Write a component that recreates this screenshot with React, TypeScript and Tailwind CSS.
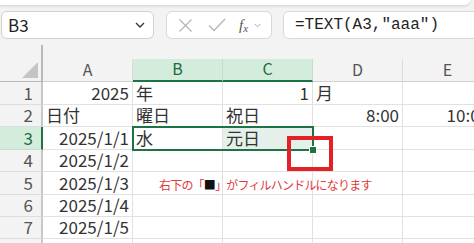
import React from 'react';

const FONT = { fontFamily: '"Noto Sans CJK JP", "Noto Sans", sans-serif' };

type Cell = { text?: string; align?: 'left' | 'right' };

const rows: { h: string; label: string; cells: Cell[] }[] = [
  { h: 'h-[23px]', label: '1', cells: [{ text: '2025', align: 'right' }, { text: '年' }, { text: '1', align: 'right' }, { text: '月' }, {}] },
  { h: 'h-[22px]', label: '2', cells: [{ text: '日付' }, { text: '曜日' }, { text: '祝日' }, { text: '8:00', align: 'right' }, { text: '10:00', align: 'right' }] },
  { h: 'h-[23px]', label: '3', cells: [{ text: '2025/1/1', align: 'right' }, { text: '水' }, { text: '元日' }, {}, {}] },
  { h: 'h-[22px]', label: '4', cells: [{ text: '2025/1/2', align: 'right' }, {}, {}, {}, {}] },
  { h: 'h-[23px]', label: '5', cells: [{ text: '2025/1/3', align: 'right' }, {}, {}, {}, {}] },
  { h: 'h-[22px]', label: '6', cells: [{ text: '2025/1/4', align: 'right' }, {}, {}, {}, {}] },
  { h: 'h-[22px]', label: '7', cells: [{ text: '2025/1/5', align: 'right' }, {}, {}, {}, {}] },
  { h: 'h-[22px]', label: '', cells: [{}, {}, {}, {}, {}] },
];

const cols = ['A', 'B', 'C', 'D', 'E'];

export default function App() {
  return (
    <div className="relative w-[474px] h-[243px] overflow-hidden bg-[#f3f3f3] text-[#333]" style={FONT}>
      {/* ribbon edge */}
      <div className="h-[5px] w-[470px] bg-white rounded-br-lg shadow-[0_1px_3px_rgba(0,0,0,0.15)]" />

      {/* formula bar */}
      <div className="flex items-center h-[28px] mt-[6px]">
        <div className="ml-[1px] w-[153px] h-full flex items-center justify-between bg-white border border-[#d1d1d1] rounded-md pl-[6px] pr-[8px]">
          <span className="text-[17px] leading-none text-[#222] pb-[2px]">B3</span>
          <svg width="10" height="6" viewBox="0 0 10 6" fill="none" stroke="#333" strokeWidth="1.3">
            <path d="M1 1l4 4 4-4" />
          </svg>
        </div>
        <div className="ml-[12px] w-[106px] h-full flex items-center bg-white border border-[#d8d8d8] rounded-md pl-[11px]">
          <svg width="15" height="15" viewBox="0 0 15 15" fill="none" stroke="#b5b5b5" strokeWidth="1.3">
            <path d="M1.5 1.5l12 12M13.5 1.5l-12 12" />
          </svg>
          <svg className="ml-[15px]" width="18" height="14" viewBox="0 0 18 14" fill="none" stroke="#b5b5b5" strokeWidth="1.3">
            <path d="M1 7.5l5 5L17 1" />
          </svg>
          <span className="ml-[13px] text-[15px] italic leading-none text-[#555]" style={{ fontFamily: '"Liberation Serif", serif' }}>
            f<sub className="text-[11px]">x</sub>
          </span>
          <svg className="ml-[6px]" width="7" height="5" viewBox="0 0 7 5" fill="none" stroke="#aaa" strokeWidth="1">
            <path d="M0.5 0.8l3 3 3-3" />
          </svg>
        </div>
        <div className="ml-[11px] flex-1 h-full flex items-center bg-white border border-[#d8d8d8] rounded-l-md pl-[11px] -mr-[10px]">
          <span className="text-[16px] leading-none text-[#222]" style={{ fontFamily: '"Liberation Mono", monospace' }}>
            =TEXT(A3,"aaa")
          </span>
        </div>
      </div>

      {/* sheet */}
      <div className="mt-[6px] flex flex-col">
        {/* column headers */}
        <div className="flex h-[37px]">
          <div className="relative w-[43px] shrink-0 border-r-2 border-b border-[#b9b9b9]">
            <div className="absolute right-[3px] bottom-[3px] w-0 h-0 border-l-[16px] border-l-transparent border-b-[16px] border-b-[#c4c4c4]" />
          </div>
          {cols.map((c) => {
            const sel = c === 'B' || c === 'C';
            return (
              <div key={c} className="w-[90px] shrink-0 flex flex-col justify-end">
                <div
                  className={`h-[23px] flex items-center justify-center text-[16px] leading-none pb-[3px] ${
                    sel
                      ? 'bg-[#d3ecdc] text-[#1d6b40] border-b-2 border-[#1f7244] border-r border-r-[#c6dccf]'
                      : 'text-[#555] border-b border-[#d0d0d0] border-r border-r-[#dcdcdc]'
                  }`}
                >
                  {c}
                </div>
              </div>
            );
          })}
        </div>

        {/* rows */}
        {rows.map((r, i) => {
          const sel = i === 2;
          return (
            <div key={i} className={`flex ${r.h}`}>
              <div
                className={`w-[43px] shrink-0 flex items-center justify-end pr-[8px] pb-[2px] text-[17px] leading-none border-b ${
                  sel
                    ? 'bg-[#d3ecdc] text-[#1d6b40] border-r-2 border-r-[#1f7244] border-b-[#c6dccf]'
                    : 'text-[#555] border-r-2 border-r-[#c8c8c8] border-b-[#dcdcdc]'
                }`}
              >
                {r.label}
              </div>
              {r.cells.map((c, j) => (
                <div
                  key={j}
                  className={`w-[90px] shrink-0 flex items-center overflow-hidden whitespace-nowrap border-r border-b border-[#e1e1e1] px-[3px] pb-[2px] text-[17px] leading-none ${
                    c.align === 'right' ? 'justify-end' : 'justify-start'
                  } ${sel && j === 2 ? 'bg-[#e6f0ea]' : 'bg-white'}`}
                >
                  {c.text}
                </div>
              ))}
            </div>
          );
        })}
      </div>

      {/* selection B3:C3 */}
      <div className="absolute left-[132px] top-[126px] w-[182px] h-[25px] border-2 border-[#1f7244] pointer-events-none" />
      {/* fill handle */}
      <div className="absolute left-[310px] top-[147px] w-[6px] h-[6px] bg-[#1f7244] outline outline-1 outline-white" />
      {/* red callout */}
      <div className="absolute left-[287px] top-[136px] w-[46px] h-[35px] border-4 border-[#e42127]" />
      <div className="absolute left-[159px] top-[179px] text-[12px] tracking-[-0.8px] leading-none text-[#e03a3a] whitespace-nowrap">
        右下の「<span className="text-[#111]">■</span>」がフィルハンドルになります
      </div>
    </div>
  );
}
